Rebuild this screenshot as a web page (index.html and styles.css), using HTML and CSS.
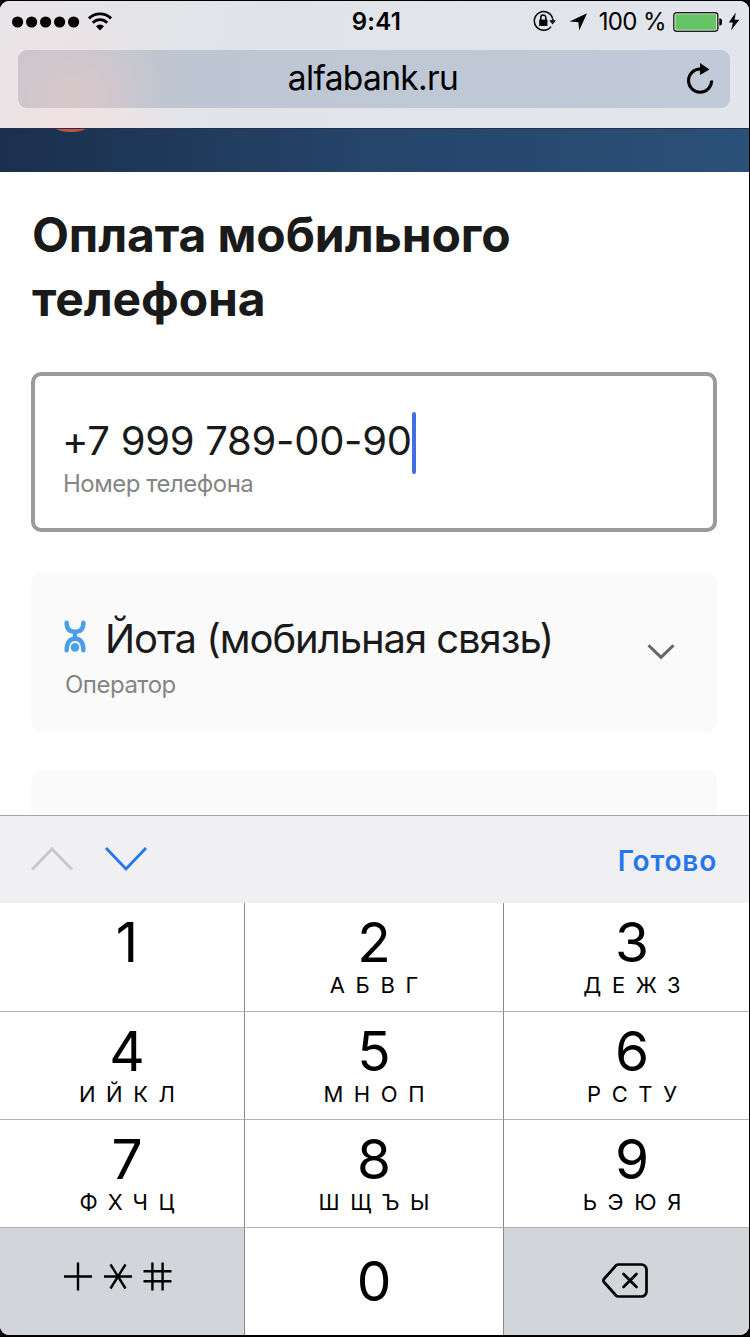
FILE: index.html
```html
<!DOCTYPE html>
<html lang="ru">
<head>
<meta charset="utf-8">
<title>Оплата мобильного телефона</title>
<link rel="stylesheet" href="styles.css">
</head>
<body>
<div class="phone">
  <header class="browser">
    <div class="status">
      <div class="status-left">
        <svg width="68" height="12" viewBox="0 0 68 12"><circle cx="5.6" cy="6" r="5.6"/><circle cx="19.6" cy="6" r="5.6"/><circle cx="33.6" cy="6" r="5.6"/><circle cx="47.6" cy="6" r="5.6"/><circle cx="61.6" cy="6" r="5.6"/></svg>
        <svg class="wifi" width="24" height="19" viewBox="0 0 24 19" fill="none" stroke="#000"><path d="M1 6.4a15.6 15.6 0 0 1 22 0" stroke-width="2.9"/><path d="M4.8 10.7a10 10 0 0 1 14.4 0" stroke-width="2.7"/><path d="M8 14.2a5.4 5.4 0 0 1 8 0L12 18.6Z" fill="#000" stroke="none"/></svg>
      </div>
      <div class="clock">9:41</div>
      <div class="status-right">
        <svg class="lock" width="24" height="22" viewBox="0 0 24 22" fill="none" stroke="#000" stroke-width="1.5"><path d="M19.5 8.2A9.3 9.3 0 1 0 18 16.6M19.7 8.5v3"/><path d="M16.3 10.3h6.6l-3.3 4.2Z" fill="#000" stroke="none"/><rect x="6.2" y="9.6" width="8.2" height="6.4" fill="#000" stroke="none"/><path d="M7.8 10V7.5a2.5 2.5 0 0 1 5 0V10"/></svg>
        <svg class="arrow" width="19" height="18" viewBox="0 0 19 18"><path d="M18 .3 10.2 17.5 9.4 9.3.6 8.6Z"/></svg>
        <span class="percent">100 %</span>
        <svg class="battery" width="50" height="20" viewBox="0 0 50 20"><rect x=".8" y=".8" width="44" height="18.4" rx="2.6" fill="#fff" stroke="#222" stroke-width="1.4"/><rect x="2.3" y="2.3" width="41" height="15.4" rx="1" fill="#65c466"/><path d="M46.3 6.5h.7a2 2 0 0 1 2 2v3a2 2 0 0 1-2 2h-.7Z"/></svg>
        <svg class="bolt" width="12" height="19" viewBox="0 0 12 19"><path d="M7.8.5.8 10.4h4.1L3 18.5l8.3-10.7H6.6Z"/></svg>
      </div>
    </div>
    <div class="address">
      <span class="url">alfabank.ru</span>
      <svg class="reload" width="30" height="32" viewBox="0 0 30 32"><path d="M25.7 17.6a11.6 11.6 0 1 1-11.5-11.6" fill="none" stroke="#000" stroke-width="3"/><path d="M14 0v12l9.4-5.6Z"/></svg>
    </div>
  </header>
  <div class="banner"><div class="spot"></div></div>
  <main class="page">
    <h1>Оплата мобильного<br>телефона</h1>
    <section class="field active">
      <div class="value"><span class="number">+7 999 789-00-90</span><i class="caret"></i></div>
      <div class="label">Номер телефона</div>
    </section>
    <section class="field operator">
      <div>
        <div class="value"><svg class="yota" width="22" height="33" viewBox="0 0 22 33" fill="none" stroke="#4a9fe8" stroke-width="4.4" stroke-linecap="round"><path d="M2.6 2.8C2.6 9.5 6.2 11.8 11 11.8S19.4 9.5 19.4 2.8M11 12v7"/><path d="M2.6 30.2c0-7.8 3.2-11.4 8.4-11.4s8.4 3.6 8.4 11.4"/><circle cx="11" cy="27.4" r="4.3" fill="#4a9fe8" stroke="none"/></svg><span class="operator-name">Йота (мобильная связь)</span></div>
        <div class="label">Оператор</div>
      </div>
      <svg class="chevron" width="28" height="16" viewBox="0 0 28 16" fill="none" stroke="#666" stroke-width="3"><path d="M1.5 1.2 14 13.4 26.5 1.2"/></svg>
    </section>
    <section class="field next"></section>
  </main>
  <div class="toolbar">
    <svg width="116" height="26" viewBox="0 0 116 26" fill="none" stroke-width="2.9"><path d="M1 22.5 21 2 41 22.5" stroke="#c8c8ca"/><path d="M75 1 95 22 115 1" stroke="#2477f2"/></svg>
    <span class="done">Готово</span>
  </div>
  <div class="keys">
    <div class="key"><b>1</b></div>
    <div class="key"><b>2</b><span>АБВГ</span></div>
    <div class="key"><b>3</b><span>ДЕЖЗ</span></div>
    <div class="key"><b>4</b><span>ИЙКЛ</span></div>
    <div class="key"><b>5</b><span>МНОП</span></div>
    <div class="key"><b>6</b><span>РСТУ</span></div>
    <div class="key"><b>7</b><span>ФХЧЦ</span></div>
    <div class="key"><b>8</b><span>ШЩЪЫ</span></div>
    <div class="key"><b>9</b><span>ЬЭЮЯ</span></div>
    <div class="key gray symbols"><svg width="108" height="29" viewBox="0 0 108 29" fill="none" stroke="#000" stroke-width="2.4"><path d="M0 14.5h28M14 .5v28M40 14.5h28M46.5 2.5l15 24M61.5 2.5l-15 24M79.5 9.2h28M79.5 19.3h28M88.4.5v28M98.6.5v28"/></svg></div>
    <div class="key zero"><b>0</b></div>
    <div class="key gray erase"><svg width="46" height="35" viewBox="0 0 46 35" fill="none" stroke="#000" stroke-width="2.7" stroke-linejoin="round" stroke-linecap="round"><path d="M16.5 1.5h23a5 5 0 0 1 5 5v22a5 5 0 0 1-5 5h-23q-1.5 0-2.5-1L2 19q-1.3-1.5 0-3L14 2.5q1-1 2.5-1Z"/><path d="m21.5 11 13 13M34.5 11l-13 13"/></svg></div>
  </div>
</div>
</body>
</html>
```

FILE: styles.css
```css
* { box-sizing: border-box; }
body {
  margin: 0;
  padding: 1px 1px 2px 0;
  height: 1337px;
  overflow: hidden;
  background: #000;
  color: #1a1a1a;
  font-family: Inter, "Liberation Sans", sans-serif;
}
svg { display: block; flex: none; }
.phone {
  display: flex;
  flex-direction: column;
  height: 1334px;
  overflow: hidden;
  border-radius: 9px;
  background: #fff;
}
.browser {
  height: 127px;
  flex: none;
  padding: 0 19px 0 18px;
  color: #000;
  background: radial-gradient(ellipse 110px 100px at 70px 105px, #f2e2e2, #f2e2e200), linear-gradient(100deg, #e8e5e8, #e0e3e8 35%, #e3e5ec);
}
.status {
  display: grid;
  grid-template-columns: 1fr auto 1fr;
  align-items: center;
  height: 49px;
  margin: 0 -10px 0 -6px;
  padding-bottom: 8px;
}
.status-left, .status-right { display: flex; align-items: center; }
.status-right { justify-content: flex-end; }
.wifi { margin: -1px 0 0 8px; }
.clock { margin-left: 1px; font-size: 24px; font-weight: 600; letter-spacing: 0.3px; }
.lock { margin: -1px 12px 0 0; }
.arrow { margin-right: 11px; }
.percent { font-size: 24px; letter-spacing: -0.6px; white-space: nowrap; }
.battery { margin: 0 0 0 7px; }
.bolt { margin: -1px 0 0 5px; }
.address {
  display: flex;
  align-items: center;
  justify-content: flex-end;
  height: 58px;
  padding-right: 14px;
  border-radius: 9px;
  background: radial-gradient(ellipse 90px 80px at 55px 45px, #dac8cb, #dac8cb00), linear-gradient(90deg, #c8c6cd, #bdc6d2 25%, #c1cad8);
}
.url { flex: 1; margin-top: -2px; padding-left: 42px; text-align: center; font-size: 33.5px; letter-spacing: -0.65px; }
.banner {
  height: 44px;
  flex: none;
  overflow: hidden;
  border-top: 1px solid #26304a;
  background: linear-gradient(90deg, #1b2f4e, #25456a 50%, #2b5079);
}
.spot { width: 30px; height: 8px; margin: -5px 0 0 56px; border-radius: 50%; background: #c5513f; }
.page { height: 643px; flex: none; overflow: hidden; padding: 31px 32px 0 31px; }
h1 { margin: 0 0 41px 1px; font-size: 48px; line-height: 64px; font-weight: 700; letter-spacing: -0.12px; }
.field { height: 160px; padding: 40px 32px 0; border-radius: 10px; }
.active { padding: 36px 28px 0 28px; border: 4px solid #9b9b9d; }
.value { display: flex; height: 56px; align-items: center; white-space: nowrap; font-size: 40px; }
.number { margin-left: -1px; letter-spacing: -0.27px; }
.operator-name { letter-spacing: -1.05px; }
.caret { width: 4px; height: 62px; margin: 6px 0 0 0; border-radius: 2px; background: #456fe0; }
.label { font-size: 24px; line-height: 32px; letter-spacing: -0.5px; color: #858585; }
.operator { display: flex; justify-content: space-between; margin-top: 40px; padding: 38px 42px 0 33px; background: #fafafa; }
.operator .label { padding-left: 1px; margin-top: 3px; }
.yota { margin: -4px 19px 0 0; }
.chevron { margin-top: 34px; }
.next { margin-top: 38px; background: #fafafa; }
.toolbar {
  display: flex;
  align-items: center;
  justify-content: space-between;
  height: 88px;
  flex: none;
  padding: 0 32px 0 31px;
  border-top: 1px solid #a5a5a7;
  background: #f0f0f2;
}
.done { margin-top: 2px; font-size: 28px; font-weight: 600; letter-spacing: 0.8px; color: #2477ee; }
.keys { display: grid; grid-template: repeat(4, 108px) / 244px 259px 246px; color: #000; }
.key { display: flex; flex-direction: column; align-items: center; padding-top: 6px; }
.key:not(:nth-child(3n + 1)) { border-left: 1px solid #88898c; }
.key:nth-child(3n + 1) { padding-left: 10px; }
.key:nth-child(3n) { padding-left: 11px; }
.key:nth-child(n + 4) { border-top: 1px solid #b5b5b7; }
.key b { font-size: 55px; line-height: 66px; font-weight: 400; }
.key span { font-size: 22px; line-height: 21px; letter-spacing: 10.6px; margin-right: -10.6px; }
.gray { background: #d2d5da; }
.key.symbols { padding: 34px 9px 0 0; }
.key.zero { padding-top: 20px; }
.key.erase { padding: 35px 3px 0 0; }
```
